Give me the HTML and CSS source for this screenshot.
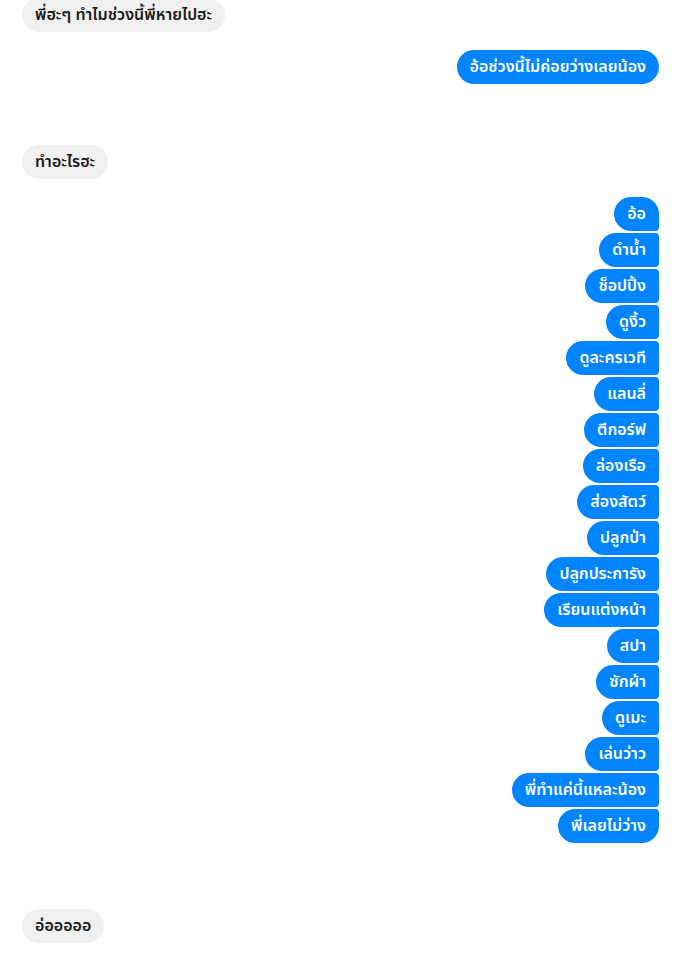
FILE: index.html
```html
<!DOCTYPE html>
<html lang="th">
<head>
<meta charset="utf-8">
<link rel="stylesheet" href="styles.css">
</head>
<body>
<div class="chat">
  <div class="row in first"><span class="bubble">พี่ฮะๆ ทำไมช่วงนี้พี่หายไปฮะ</span></div>
  <div class="row out g2"><span class="bubble">อ้อช่วงนี้ไม่ค่อยว่างเลยน้อง</span></div>
  <div class="row in g3"><span class="bubble">ทำอะไรฮะ</span></div>
  <div class="stack g4">
    <span class="bubble top">อ้อ</span>
    <span class="bubble mid">ดำน้ำ</span>
    <span class="bubble mid">ช็อปปิ้ง</span>
    <span class="bubble mid">ดูงิ้ว</span>
    <span class="bubble mid">ดูละครเวที</span>
    <span class="bubble mid">แลนลี่</span>
    <span class="bubble mid">ตีกอร์ฟ</span>
    <span class="bubble mid">ล่องเรือ</span>
    <span class="bubble mid">ส่องสัตว์</span>
    <span class="bubble mid">ปลูกป่า</span>
    <span class="bubble mid">ปลูกประการัง</span>
    <span class="bubble mid">เรียนแต่งหน้า</span>
    <span class="bubble mid">สปา</span>
    <span class="bubble mid">ซักผ้า</span>
    <span class="bubble mid">ดูเมะ</span>
    <span class="bubble mid">เล่นว่าว</span>
    <span class="bubble mid">พี่ทำแค่นี้แหละน้อง</span>
    <span class="bubble bottom">พี่เลยไม่ว่าง</span>
  </div>
  <div class="row in g5"><span class="bubble">อ่อออออ</span></div>
</div>
</body>
</html>
```
FILE: styles.css
```css
html, body {
  margin: 0;
  padding: 0;
  background: #ffffff;
}
.chat {
  display: flex;
  flex-direction: column;
  padding: 0 20px 0 22px;
  font-family: "Noto Sans Thai", "Noto Sans", "DejaVu Sans", sans-serif;
  font-size: 16px;
  font-weight: 600;
}
.row {
  display: flex;
}
.row.in { justify-content: flex-start; }
.row.out { justify-content: flex-end; }
.bubble {
  display: inline-flex;
  align-items: center;
  height: 34px;
  box-sizing: border-box;
  padding: 0 13px;
  border-radius: 17px;
  white-space: nowrap;
}
.in .bubble {
  background: #f1f0f0;
  color: #1a1a1a;
}
.out .bubble, .stack .bubble {
  background: #0084ff;
  color: #ffffff;
}
.first { margin-top: -2px; }
.g2 { margin-top: 18px; }
.g3 { margin-top: 61px; }
.g4 { margin-top: 18px; }
.g5 { margin-top: 66px; }
.stack {
  display: flex;
  flex-direction: column;
  align-items: flex-end;
  gap: 2px;
}
.stack .top { border-radius: 17px 17px 4px 17px; }
.stack .mid { border-radius: 17px 4px 4px 17px; }
.stack .bottom { border-radius: 17px 4px 17px 17px; }
```
